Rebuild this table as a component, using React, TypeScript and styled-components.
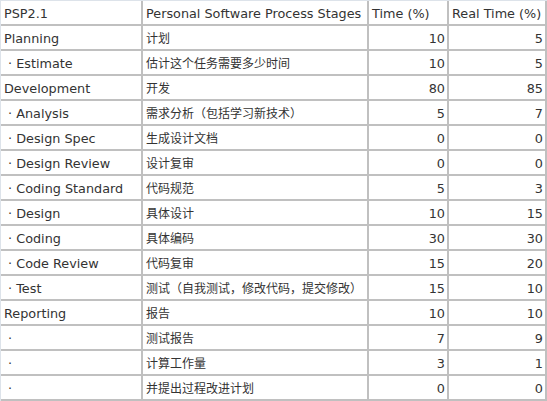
import { createGlobalStyle } from "styled-components";
import styled from "styled-components";

type Row = [string, string, string, string];

const rows: Row[] = [
    ["Planning", "计划", "10", "5"],
    ["\u00a0· Estimate", "估计这个任务需要多少时间", "10", "5"],
    ["Development", "开发", "80", "85"],
    ["\u00a0· Analysis", "需求分析（包括学习新技术）", "5", "7"],
    ["\u00a0· Design Spec", "生成设计文档", "0", "0"],
    ["\u00a0· Design Review", "设计复审", "0", "0"],
    ["\u00a0· Coding Standard", "代码规范", "5", "3"],
    ["\u00a0· Design", "具体设计", "10", "15"],
    ["\u00a0· Coding", "具体编码", "30", "30"],
    ["\u00a0· Code Review", "代码复审", "15", "20"],
    ["\u00a0· Test", "测试（自我测试，修改代码，提交修改）", "15", "10"],
    ["Reporting", "报告", "10", "10"],
    ["\u00a0·", "测试报告", "7", "9"],
    ["\u00a0·", "计算工作量", "3", "1"],
    ["\u00a0·", "并提出过程改进计划", "0", "0"],
];

const GlobalStyle = createGlobalStyle`
    body {
        margin: 0;
        background: #fff;
    }
`;

export default function App() {
    return (
        <>
            <GlobalStyle />
            <TableStl>
                <colgroup>
                    <col style={{ width: 142 }} />
                    <col style={{ width: 226 }} />
                    <col style={{ width: 80 }} />
                    <col style={{ width: 98 }} />
                </colgroup>
                <thead>
                    <tr>
                        <CellStl>PSP2.1</CellStl>
                        <CellStl>Personal Software Process Stages</CellStl>
                        <CellStl>Time (%)</CellStl>
                        <CellStl>Real Time (%)</CellStl>
                    </tr>
                </thead>
                <tbody>
                    {rows.map((r, i) => (
                        <tr key={i}>
                            <CellStl>{r[0]}</CellStl>
                            <CellStl><CjkStl>{r[1]}</CjkStl></CellStl>
                            <CellStl $num>{r[2]}</CellStl>
                            <CellStl $num>{r[3]}</CellStl>
                        </tr>
                    ))}
                </tbody>
            </TableStl>
        </>
    );
}

const TableStl = styled.table`
    border-collapse: separate;
    border-spacing: 0;
    table-layout: fixed;
    width: 547px;
    border-top: 1px solid #dde3ea;
    border-left: 1px solid #dde3ea;
    font-family: "DejaVu Sans", Verdana, "Noto Sans CJK SC", sans-serif;
    font-size: 12.8px;
    color: #333;
`;

const CellStl = styled.td<{ $num?: boolean }>`
    height: 21px;
    padding: 2px 2px 0 3px;
    border-right: 2px solid #c0c0c0;
    border-bottom: 2px solid #c0c0c0;
    text-align: ${(p) => (p.$num ? "right" : "left")};
    white-space: nowrap;
    overflow: hidden;
    box-sizing: content-box;
    line-height: 16px;
    vertical-align: middle;
`;

const CjkStl = styled.span`
    font-family: "Noto Sans CJK SC", sans-serif;
    font-size: 12px;
    line-height: 14px;
`;
